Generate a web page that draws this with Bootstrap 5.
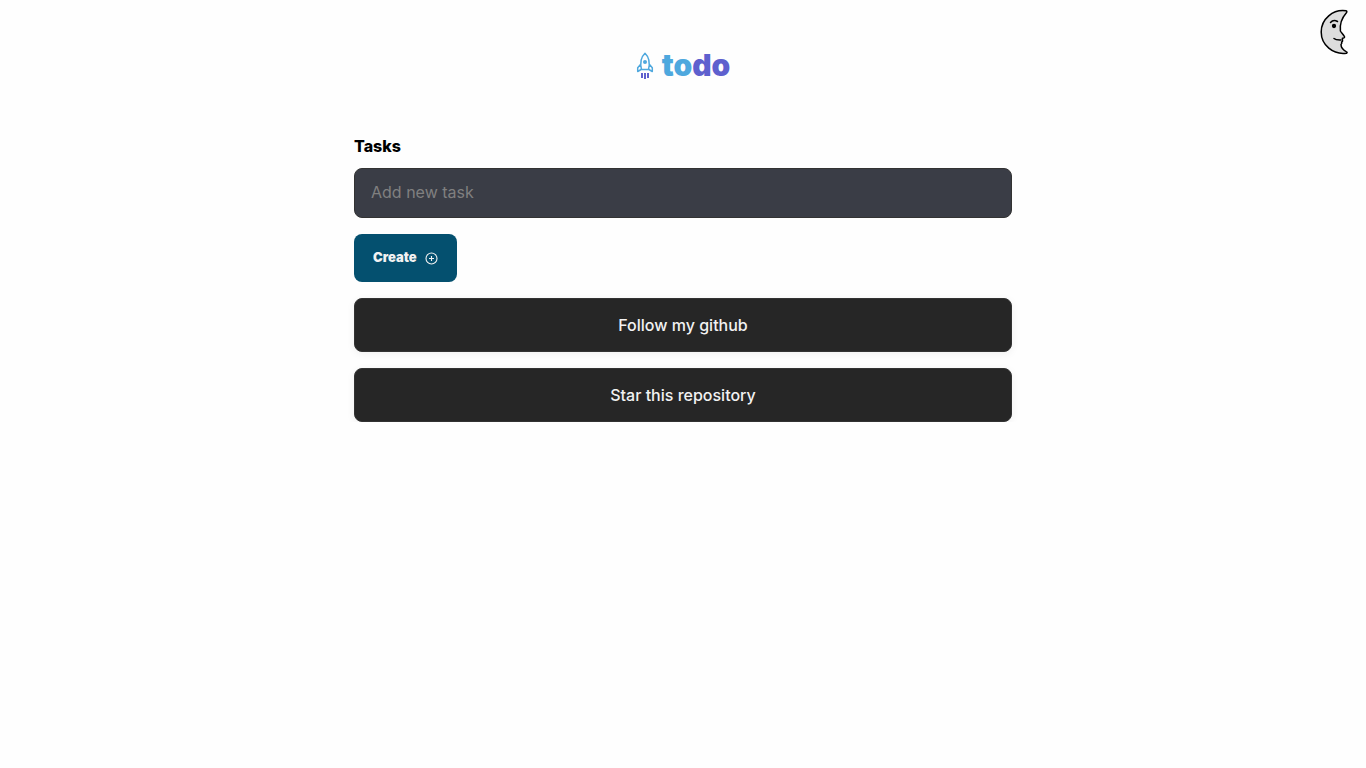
<!DOCTYPE html>
<html lang="en">
<head>
<meta charset="utf-8">
<meta name="viewport" content="width=device-width, initial-scale=1">
<title>todo</title>
<link href="https://cdn.jsdelivr.net/npm/bootstrap@5.3.0/dist/css/bootstrap.min.css" rel="stylesheet">
<style>
body { font-family: Inter, sans-serif; background: #fefefe; color: #000; line-height: 24px; }
.theme-toggle { line-height: 0; top: 8px; right: 17px; }
.brand { font-size: 30px; line-height: 34px; font-weight: 900; color: #4ea8de; }
.brand-end { color: #5e60ce; }
.board { max-width: 690px; padding-top: 52px; }
.task-label { font-weight: 800; margin-bottom: 10px; }
.task-input, .task-input:focus { height: 50px; background: #3a3d46; border: 1px solid #333; border-radius: 8px; color: #f2f2f2; padding: 0 16px 2px; }
.task-input::placeholder { color: #808080; }
.create-btn, .create-btn:hover { height: 48px; padding: 0 19px; border: 0; border-radius: 8px; background: #04506f; color: #f2f2f2; font-size: 13px; font-weight: 900; }
.link-btn { border: 1px solid #333; border-radius: 8px; background: #262626; color: #f2f2f2; font-weight: 500; padding: 14px 16px; box-shadow: 0 2px 8px rgba(0, 0, 0, .06); }
.link-btn:hover { background: #333; color: #fff; }
</style>
</head>
<body>
<button type="button" class="theme-toggle btn position-absolute border-0 p-0" aria-label="Toggle theme">
  <svg width="30" height="48" viewBox="0 0 30 48" fill="none" stroke="#000" stroke-width="1.500" stroke-linecap="round" stroke-linejoin="round">
    <path fill="#ddd" d="M27 2.800C14 1 2.200 11 2.200 24s11.800 23 25.300 21.200c.8-.3.8-1 0-1.400-3-1.600-5.500-4-5.500-7.300.8-.8 1.200-1.500.6-2.500.9-.2 1.200-.9.800-2 .2-.7 0-1.200 0-1.700 1.500-.1 2.600-.8 2-1.800-1-1.900-3.300-4-4-5.500-.8-7 1-12.500 5.800-18 .9-1 .9-2-.2-2.200z"/>
    <path d="M11.500 14.500c2-2.400 5-2.200 7-1M15 30.500c1.800 1.600 4.300 1.500 7 1.400"/>
    <circle cx="15" cy="18" r="1.400" fill="#000"/>
  </svg>
</button>
<header class="brand d-flex justify-content-center align-items-center gap-2 pt-5">
  <svg width="18" height="28" viewBox="0 0 18 28" fill="none" stroke="#4ea8de" stroke-width="1.500" stroke-linejoin="round" aria-hidden="true">
    <path d="M5.500 18.500C3.700 11 5 6 9 2.200c4 3.800 5.300 8.800 3.500 16.300zM4.500 13.500l-2.800 3.300v3.800L5 18.500M13.500 13.500l2.800 3.300v3.800L13 18.500"/>
    <circle cx="9" cy="11" r="2" fill="#4ea8de" stroke="none"/>
    <path stroke="#5e60ce" stroke-width="2" d="M6 22v5M9 22v6M12 22v5"/>
  </svg>
  <div>to<span class="brand-end">do</span></div>
</header>
<main class="board container-fluid px-3">
  <form onsubmit="return false">
    <label for="task" class="task-label d-block">Tasks</label>
    <input id="task" type="text" class="task-input form-control mb-3" placeholder="Add new task">
    <button type="submit" class="create-btn btn d-inline-flex align-items-center gap-2 mb-3">Create
      <svg width="13" height="13" viewBox="0 0 13 13" fill="none" stroke="#f2f2f2" stroke-width="1.100" aria-hidden="true"><circle cx="6.500" cy="6.500" r="5.500"/><path d="M6.500 4v5M4 6.500h5"/></svg>
    </button>
  </form>
  <div class="d-grid gap-3">
    <a href="#github" class="link-btn btn">Follow my github</a>
    <a href="#star" class="link-btn btn">Star this repository</a>
  </div>
</main>
<script src="https://cdn.jsdelivr.net/npm/bootstrap@5.3.0/dist/js/bootstrap.bundle.min.js"></script>
</body>
</html>
